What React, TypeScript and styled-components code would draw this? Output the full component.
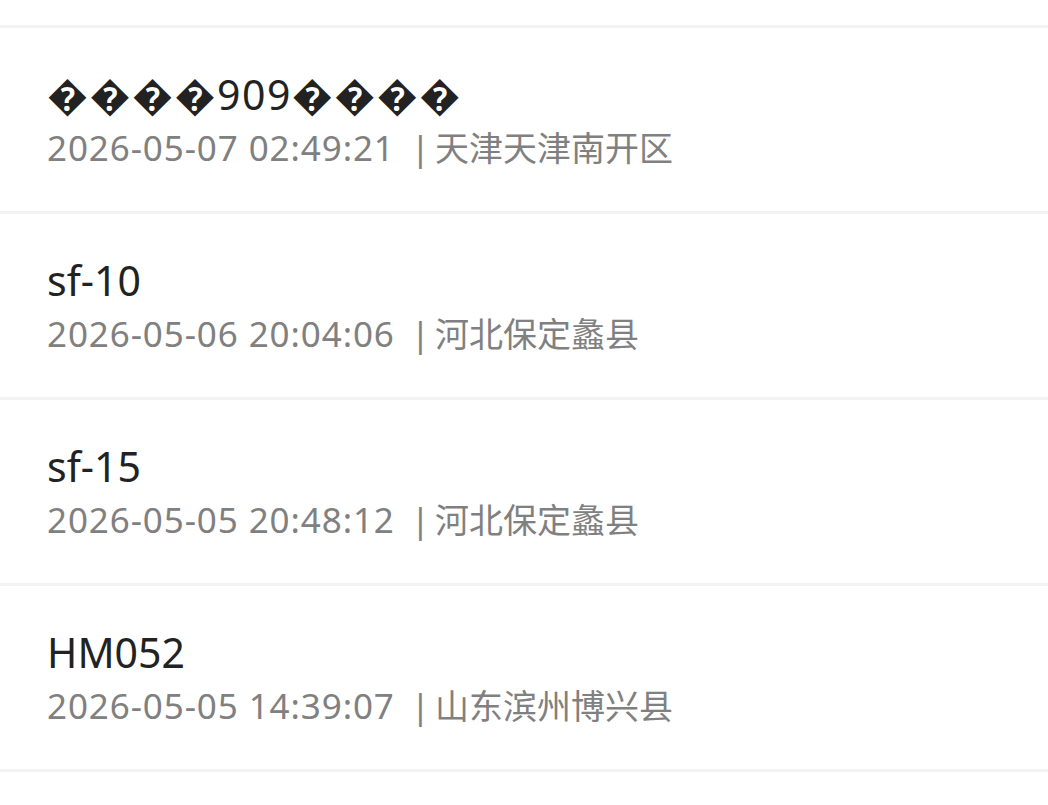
import styled, { createGlobalStyle } from "styled-components"

const GlobalStyle = createGlobalStyle`
  html, body {
    margin: 0;
    padding: 0;
    background: #ffffff;
  }
  body {
    font-family: "Noto Sans", "Noto Sans CJK SC", "DejaVu Sans", sans-serif;
  }
`

const StyledList = styled.ul`
  list-style: none;
  margin: 0;
  padding: 25px 0 0;
  border-bottom: 3px solid #f3f3f3;
`
const StyledItem = styled.li`
  height: 183px;
  border-top: 3px solid #f3f3f3;
  padding: 0 47px;
  display: flex;
  flex-direction: column;
  justify-content: center;
  gap: 5px;
  box-sizing: content-box;
`
const StyledName = styled.div<{ $wide?: boolean }>`
  font-size: 41px;
  line-height: 52px;
  color: #222222;
  white-space: nowrap;
  letter-spacing: ${({ $wide }) => ($wide ? "1.5px" : "0")};
`
const StyledMeta = styled.div`
  font-size: 35px;
  line-height: 46px;
  color: #808080;
  white-space: nowrap;
  letter-spacing: 0.9px;
`
const StyledBar = styled.span`
  margin: 0 4px 0 16px;
`
const StyledPlace = styled.span`
  font-size: 34px;
  letter-spacing: 0;
`

interface Record {
  name: string
  time: string
  place: string
}

const records: Record[] = [
  { name: "\uFFFD\uFFFD\uFFFD\uFFFD909\uFFFD\uFFFD\uFFFD\uFFFD", time: "2026-05-07 02:49:21", place: "天津天津南开区" },
  { name: "sf-10", time: "2026-05-06 20:04:06", place: "河北保定蠡县" },
  { name: "sf-15", time: "2026-05-05 20:48:12", place: "河北保定蠡县" },
  { name: "HM052", time: "2026-05-05 14:39:07", place: "山东滨州博兴县" },
]

const App = () => {
  return (
    <>
      <GlobalStyle />
      <StyledList>
        {records.map((r, i) => (
          <StyledItem key={i}>
            <StyledName $wide={r.name.includes("\uFFFD")}>{r.name}</StyledName>
            <StyledMeta>
              {r.time}
              <StyledBar>|</StyledBar>
              <StyledPlace>{r.place}</StyledPlace>
            </StyledMeta>
          </StyledItem>
        ))}
      </StyledList>
    </>
  )
}

export default App
